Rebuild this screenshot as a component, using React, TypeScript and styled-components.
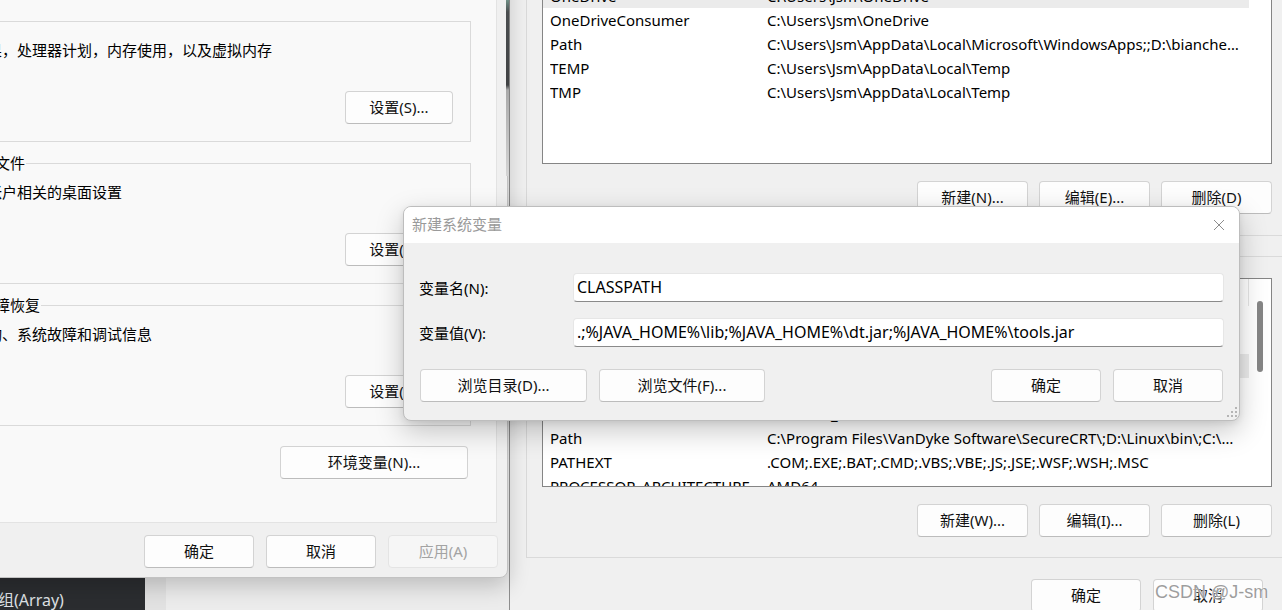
import styled, { createGlobalStyle } from 'styled-components';

const UI_FONT = `"Noto Sans", "Noto Sans CJK SC", sans-serif`;

const GlobalStyle = createGlobalStyle`
  html, body { margin: 0; padding: 0; }
  body {
    background: #ececec;
    font-family: ${UI_FONT};
    font-size: 15px;
    color: #000;
  }
  *, *::before, *::after { box-sizing: border-box; }
`;

const Desktop = styled.div`
  position: relative;
  width: 1282px;
  height: 610px;
  overflow: hidden;
  background: #ececec;
`;

/* ---------- things behind the windows ---------- */

const EditorPane = styled.div`
  position: absolute;
  left: 0;
  top: 540px;
  width: 145px;
  height: 70px;
  background: #2b2d30;
  color: #dfe1e5;
  font-size: 16px;
  line-height: 20px;
  padding: 50px 0 0 0;
  white-space: nowrap;
  overflow: hidden;
  span { margin-left: -18px; }
`;

const EditorGutter = styled.div`
  position: absolute;
  left: 145px;
  top: 540px;
  width: 21px;
  height: 70px;
  background: #e2e2e2;
`;

/* a sliver of whatever lies behind, between the two windows */
const WallpaperSliver = styled.div`
  position: absolute;
  left: 506px;
  top: 0;
  z-index: 3;
  width: 3px;
  height: 176px;
  background: linear-gradient(#6f8f86 0, #4a4d4f 12px, #3f4143 85px, #a9a9a9 90px, #d4d4d4 176px);
`;

/* ---------- shared controls ---------- */

const Button = styled.button<{ $w: number; $h?: number }>`
  width: ${(p) => p.$w}px;
  height: ${(p) => p.$h ?? 33}px;
  flex: none;
  padding: 0 0 2px 0;
  border: 1px solid #d3d3d3;
  border-bottom-color: #bcbcbc;
  border-radius: 4px;
  background: #fdfdfd;
  font: 15px/20px ${UI_FONT};
  color: #111;
  &:disabled {
    background: #f6f6f6;
    border-color: #e4e4e4;
    color: #a3a3a3;
  }
`;

const GroupBox = styled.fieldset`
  margin: 0;
  min-width: 0;
  border: 1px solid #dadada;
  display: flex;
  flex-direction: column;
  legend {
    padding: 0 1px;
    font-size: 15px;
    line-height: 20px;
  }
`;

/* ---------- system properties window (left) ---------- */

const SysWindow = styled.div`
  position: absolute;
  left: -90px;
  top: -40px;
  width: 598px;
  height: 618px;
  z-index: 2;
  display: flex;
  flex-direction: column;
  background: #f0f0f0;
  border: 1px solid #c2c2c2;
  border-radius: 8px;
  box-shadow: 0 8px 22px rgba(0, 0, 0, 0.2);
`;

const TabPage = styled.div`
  flex: 1;
  margin: 9px 10px 0 4px;
  padding: 40px 25px 0 12px;
  background: #f9f9f9;
  border: 1px solid #e3e3e3;
  display: flex;
  flex-direction: column;
  gap: 11px;
`;

const SysGroup = styled(GroupBox)`
  padding: 0 17px 17px 5px;
`;

const GroupText = styled.div`
  margin: 9px 0 0 8px;
  padding-bottom: 1px;
  line-height: 20px;
  white-space: nowrap;
`;

const GroupActions = styled.div`
  margin-top: 30px;
  display: flex;
  justify-content: flex-end;
`;

const EnvButton = styled(Button)`
  align-self: flex-end;
  margin: 9px 3px 0 0;
`;

const SysFooter = styled.div`
  height: 54px;
  display: flex;
  justify-content: flex-end;
  gap: 12px;
  padding: 12px 9px 0 0;
`;

/* ---------- environment variables window (right) ---------- */

const EnvWindow = styled.div`
  position: absolute;
  left: 509px;
  top: -130px;
  width: 796px;
  height: 760px;
  z-index: 1;
  display: flex;
  flex-direction: column;
  padding: 39px 16px 0 16px;
  background: #f0f0f0;
  border: 1px solid #8e8e8e;
  border-radius: 8px;
`;

const VarGroup = styled(GroupBox)<{ $listTop: number; $bottom: number }>`
  padding: 0 15px ${(p) => p.$bottom}px 15px;
  & + & { margin-top: 10px; }
  > div:first-of-type { margin-top: ${(p) => p.$listTop}px; }
`;

const VarList = styled.div<{ $h: number }>`
  height: ${(p) => p.$h}px;
  display: flex;
  background: #fff;
  border: 1px solid #858585;
  overflow: hidden;
`;

const VarTable = styled.div`
  flex: 1;
  min-width: 0;
`;

const HeaderRow = styled.div`
  height: 27px;
  display: flex;
  align-items: center;
  color: #222;
  span {
    height: 100%;
    display: flex;
    align-items: center;
    padding-left: 7px;
    border-right: 1px solid #e5e5e5;
  }
  span:first-child { width: 219px; }
  span:last-child { flex: 1; }
`;

const Row = styled.div<{ $selected?: boolean }>`
  height: 24px;
  display: flex;
  align-items: center;
  padding-left: 7px;
  line-height: 24px;
  white-space: nowrap;
  background: ${(p) => (p.$selected ? '#ebebeb' : 'transparent')};
`;

const NameCell = styled.span`
  width: 217px;
  flex: none;
  overflow: hidden;
`;

const ValueCell = styled.span`
  flex: 1;
  min-width: 0;
  overflow: hidden;
  text-overflow: ellipsis;
  padding-right: 5px;
`;

const ScrollGutter = styled.div`
  width: 22px;
  flex: none;
  display: flex;
  justify-content: center;
  padding-top: 22px;
`;

const ScrollThumb = styled.div`
  width: 6px;
  height: 71px;
  border-radius: 3px;
  background: #868686;
`;

const ListActions = styled.div`
  margin-top: 17px;
  display: flex;
  justify-content: flex-end;
  gap: 11px;
`;

const EnvFooter = styled.div`
  margin-top: 21px;
  padding-right: 25px;
  display: flex;
  justify-content: flex-end;
  gap: 12px;
`;

/* ---------- new system variable dialog ---------- */

const Dialog = styled.div`
  position: absolute;
  left: 403px;
  top: 206px;
  width: 837px;
  height: 215px;
  z-index: 5;
  display: flex;
  flex-direction: column;
  background: #f0f0f0;
  border: 1px solid #bdbdbd;
  border-radius: 8px;
  box-shadow: 0 10px 28px rgba(0, 0, 0, 0.22), 0 2px 6px rgba(0, 0, 0, 0.08);
  overflow: hidden;
`;

const TitleBar = styled.div`
  height: 36px;
  flex: none;
  display: flex;
  align-items: center;
  justify-content: space-between;
  padding: 0 0 3px 8px;
  background: #fff;
  color: #9a9a9a;
  font-size: 15px;
`;

const CloseBox = styled.div`
  width: 40px;
  height: 33px;
  display: flex;
  align-items: center;
  justify-content: center;
  padding-top: 3px;
`;

const DialogBody = styled.div`
  position: relative;
  flex: 1;
  padding: 30px 15px 0 15px;
`;

const FormGrid = styled.div`
  display: grid;
  grid-template-columns: 154px 1fr;
  grid-auto-rows: 29px;
  row-gap: 16px;
  align-items: center;
`;

const FieldLabel = styled.label`
  line-height: 20px;
  white-space: nowrap;
`;

const TextBox = styled.div`
  height: 29px;
  padding: 0 3px 2px 3px;
  display: flex;
  align-items: center;
  background: #fff;
  border: 1px solid #e6e6e6;
  border-bottom-color: #8a8a8a;
  border-radius: 4px;
  font-size: 16px;
  white-space: nowrap;
  overflow: hidden;
`;

const DialogActions = styled.div`
  margin-top: 22px;
  padding: 0 1px 0 1px;
  display: flex;
  justify-content: space-between;
`;

const ActionGroup = styled.div`
  display: flex;
  gap: 12px;
`;

const ResizeGrip = styled.svg`
  position: absolute;
  right: 1px;
  bottom: 2px;
`;

const Watermark = styled.div`
  position: absolute;
  left: 1155px;
  top: 580px;
  z-index: 6;
  font: 18px/24px "Liberation Sans", Arial, sans-serif;
  color: rgba(140, 140, 140, 0.85);
  text-shadow: 0 0 1px #fff, 0 0 2px #fff;
  white-space: nowrap;
`;

type Variable = { name: string; value: string; selected?: boolean };

const userVars: Variable[] = [
  { name: 'OneDrive', value: 'C:\\Users\\Jsm\\OneDrive', selected: true },
  { name: 'OneDriveConsumer', value: 'C:\\Users\\Jsm\\OneDrive' },
  {
    name: 'Path',
    value: 'C:\\Users\\Jsm\\AppData\\Local\\Microsoft\\WindowsApps;;D:\\bianchengruanjian\\IntelliJ IDEA\\bin;',
  },
  { name: 'TEMP', value: 'C:\\Users\\Jsm\\AppData\\Local\\Temp' },
  { name: 'TMP', value: 'C:\\Users\\Jsm\\AppData\\Local\\Temp' },
];

const systemVars: Variable[] = [
  { name: 'ComSpec', value: 'C:\\Windows\\system32\\cmd.exe' },
  { name: 'DriverData', value: 'C:\\Windows\\System32\\Drivers\\DriverData' },
  { name: 'JAVA_HOME', value: 'D:\\Java\\jdk1.8.0_301', selected: true },
  { name: 'NUMBER_OF_PROCESSORS', value: '16' },
  { name: 'OS', value: 'Windows_NT' },
  {
    name: 'Path',
    value: 'C:\\Program Files\\VanDyke Software\\SecureCRT\\;D:\\Linux\\bin\\;C:\\Windows\\system32;C:\\Windows',
  },
  { name: 'PATHEXT', value: '.COM;.EXE;.BAT;.CMD;.VBS;.VBE;.JS;.JSE;.WSF;.WSH;.MSC' },
  { name: 'PROCESSOR_ARCHITECTURE', value: 'AMD64' },
  { name: 'PROCESSOR_IDENTIFIER', value: 'Intel64 Family 6 Model 154 Stepping 3, GenuineIntel' },
];

const sysGroups = [
  { title: '性能', text: '视觉效果，处理器计划，内存使用，以及虚拟内存', button: '设置(S)...' },
  { title: '用户配置文件', text: '与登录帐户相关的桌面设置', button: '设置(E)...' },
  { title: '启动和故障恢复', text: '系统启动、系统故障和调试信息', button: '设置(T)...' },
];

function VariableList({ rows, height, thumb }: { rows: Variable[]; height: number; thumb?: boolean }) {
  return (
    <VarList $h={height}>
      <VarTable>
        <HeaderRow>
          <span>变量</span>
          <span>值</span>
        </HeaderRow>
        {rows.map((r) => (
          <Row key={r.name} $selected={r.selected}>
            <NameCell>{r.name}</NameCell>
            <ValueCell>{r.value}</ValueCell>
          </Row>
        ))}
      </VarTable>
      <ScrollGutter>{thumb && <ScrollThumb />}</ScrollGutter>
    </VarList>
  );
}

export default function App() {
  return (
    <Desktop>
      <GlobalStyle />
      <EditorPane>
        <span>数组(Array)</span>
      </EditorPane>
      <EditorGutter />
      <WallpaperSliver />

      <SysWindow>
        <TabPage>
          {sysGroups.map((g) => (
            <SysGroup key={g.title}>
              <legend>{g.title}</legend>
              <GroupText>{g.text}</GroupText>
              <GroupActions>
                <Button $w={108}>{g.button}</Button>
              </GroupActions>
            </SysGroup>
          ))}
          <EnvButton $w={188}>环境变量(N)...</EnvButton>
        </TabPage>
        <SysFooter>
          <Button $w={110}>确定</Button>
          <Button $w={110}>取消</Button>
          <Button $w={110} disabled>
            应用(A)
          </Button>
        </SysFooter>
      </SysWindow>

      <EnvWindow>
        <VarGroup $listTop={26} $bottom={21}>
          <legend>Jsm 的用户变量(U)</legend>
          <VariableList rows={userVars} height={208} />
          <ListActions>
            <Button $w={111}>新建(N)...</Button>
            <Button $w={111}>编辑(E)...</Button>
            <Button $w={111}>删除(D)</Button>
          </ListActions>
        </VarGroup>
        <VarGroup $listTop={12} $bottom={20}>
          <legend>系统变量(S)</legend>
          <VariableList rows={systemVars} height={209} thumb />
          <ListActions>
            <Button $w={111}>新建(W)...</Button>
            <Button $w={111}>编辑(I)...</Button>
            <Button $w={111}>删除(L)</Button>
          </ListActions>
        </VarGroup>
        <EnvFooter>
          <Button $w={110}>确定</Button>
          <Button $w={110}>取消</Button>
        </EnvFooter>
      </EnvWindow>

      <Dialog>
        <TitleBar>
          <span>新建系统变量</span>
          <CloseBox>
            <svg width="12" height="12" viewBox="0 0 12 12">
              <path d="M1 1 L11 11 M11 1 L1 11" stroke="#8c8c8c" strokeWidth="1" fill="none" />
            </svg>
          </CloseBox>
        </TitleBar>
        <DialogBody>
          <FormGrid>
            <FieldLabel>变量名(N):</FieldLabel>
            <TextBox>CLASSPATH</TextBox>
            <FieldLabel>变量值(V):</FieldLabel>
            <TextBox>.;%JAVA_HOME%\lib;%JAVA_HOME%\dt.jar;%JAVA_HOME%\tools.jar</TextBox>
          </FormGrid>
          <DialogActions>
            <ActionGroup>
              <Button $w={167}>浏览目录(D)...</Button>
              <Button $w={166}>浏览文件(F)...</Button>
            </ActionGroup>
            <ActionGroup>
              <Button $w={110}>确定</Button>
              <Button $w={110}>取消</Button>
            </ActionGroup>
          </DialogActions>
          <ResizeGrip width="12" height="12" viewBox="0 0 12 12">
            {[
              [8, 0],
              [4, 4],
              [8, 4],
              [0, 8],
              [4, 8],
              [8, 8],
            ].map(([x, y]) => (
              <rect key={`${x}-${y}`} x={x + 1} y={y + 1} width="2" height="2" fill="#b5b5b5" />
            ))}
          </ResizeGrip>
        </DialogBody>
      </Dialog>

      <Watermark>CSDN @J-sm</Watermark>
    </Desktop>
  );
}
